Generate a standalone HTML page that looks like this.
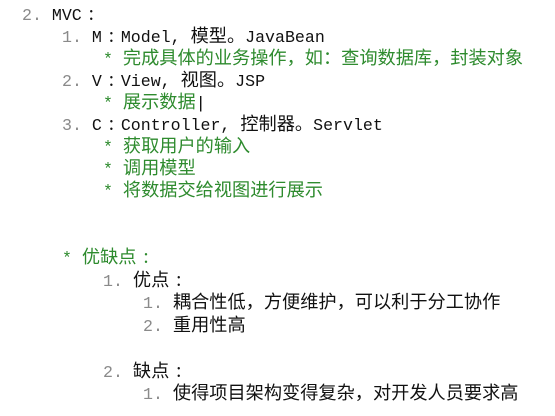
<!DOCTYPE html>
<html><head><meta charset="utf-8"><style>
body{margin:0;width:555px;height:416px;background:#fff;overflow:hidden;font-family:"Liberation Mono","Noto Sans CJK SC",monospace;font-size:16.6px;color:#111}
.l{position:absolute;white-space:pre;line-height:22px}
.n{color:#8a8a8a}
.g{color:#2e8b2e}
.c{font-family:"Noto Sans CJK SC",sans-serif;font-size:18.2px}
.k{display:inline-block;width:19px;text-align:center;font-family:"Noto Sans CJK SC",sans-serif;font-size:18px}
</style></head><body>
<div class="l" style="left:22px;top:2px"><span class="n">2. </span>MVC<span class="k">:</span></div>
<div class="l" style="left:62px;top:24px"><span class="n">1. </span>M<span class="k">:</span>Model, <span class="c">模型。</span>JavaBean</div>
<div class="l g" style="left:103px;top:46px">* <span class="c">完成具体的业务操作，如：查询数据库，封装对象</span></div>
<div class="l" style="left:62px;top:68px"><span class="n">2. </span>V<span class="k">:</span>View, <span class="c">视图。</span>JSP</div>
<div class="l g" style="left:103px;top:90px">* <span class="c">展示数据</span><span style="color:#000">|</span></div>
<div class="l" style="left:62px;top:112px"><span class="n">3. </span>C<span class="k">:</span>Controller, <span class="c">控制器。</span>Servlet</div>
<div class="l g" style="left:103px;top:134px">* <span class="c">获取用户的输入</span></div>
<div class="l g" style="left:103px;top:156px">* <span class="c">调用模型</span></div>
<div class="l g" style="left:103px;top:178px">* <span class="c">将数据交给视图进行展示</span></div>
<div class="l g" style="left:62px;top:245px">* <span class="c">优缺点</span><span class="k">:</span></div>
<div class="l" style="left:103px;top:268px"><span class="n">1. </span><span class="c">优点</span><span class="k">:</span></div>
<div class="l" style="left:143px;top:290px"><span class="n">1. </span><span class="c">耦合性低，方便维护，可以利于分工协作</span></div>
<div class="l" style="left:143px;top:313px"><span class="n">2. </span><span class="c">重用性高</span></div>
<div class="l" style="left:103px;top:359px"><span class="n">2. </span><span class="c">缺点</span><span class="k">:</span></div>
<div class="l" style="left:143px;top:381px"><span class="n">1. </span><span class="c">使得项目架构变得复杂，对开发人员要求高</span></div>
</body></html>
